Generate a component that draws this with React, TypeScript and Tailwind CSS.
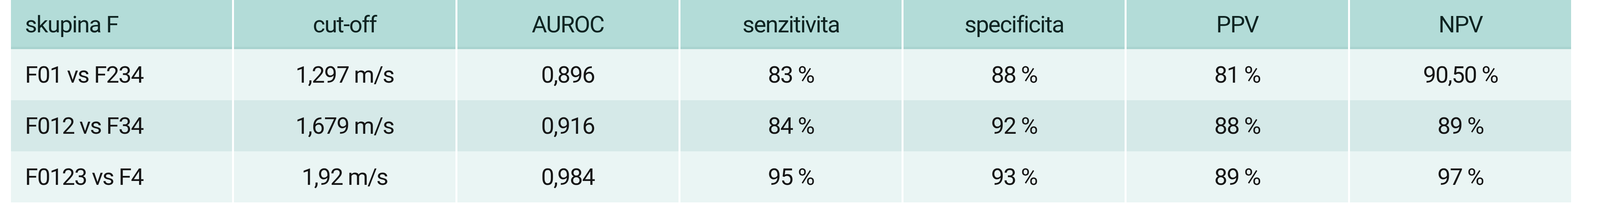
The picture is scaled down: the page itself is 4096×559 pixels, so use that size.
const headers = ["skupina F", "cut-off", "AUROC", "senzitivita", "specificita", "PPV", "NPV"];

const rows = [
  ["F01 vs F234", "1,297 m/s", "0,896", "83 %", "88 %", "81 %", "90,50 %"],
  ["F012 vs F34", "1,679 m/s", "0,916", "84 %", "92 %", "88 %", "89 %"],
  ["F0123 vs F4", "1,92 m/s", "0,984", "95 %", "93 %", "89 %", "97 %"],
];

export default function App() {
  return (
    <div className="w-[4096px] h-[559px] bg-white pl-[28px] font-['Roboto','Liberation_Sans',sans-serif] text-[60px] tracking-[-2px]">
      <div className="w-[3994px] grid grid-cols-7 gap-x-[5px]">
        {headers.map((h, i) => (
          <div
            key={h}
            className={
              "h-[126px] flex items-center pt-[6px] bg-[#b3dcd8] border-b-[6px] border-[#a9d3cf] text-[#0e2321] " +
              (i === 0 ? "pl-[36px]" : "justify-center")
            }
          >
            {h}
          </div>
        ))}
        {rows.map((r, ri) =>
          r.map((c, ci) => (
            <div
              key={ri + "-" + ci}
              className={
                "h-[131px] flex items-center text-[#161616] " +
                (ri === 1 ? "bg-[#d5e9e8] " : "bg-[#eaf5f4] ") +
                (ci === 0 ? "pl-[36px]" : "justify-center")
              }
            >
              {c}
            </div>
          ))
        )}
      </div>
    </div>
  );
}
